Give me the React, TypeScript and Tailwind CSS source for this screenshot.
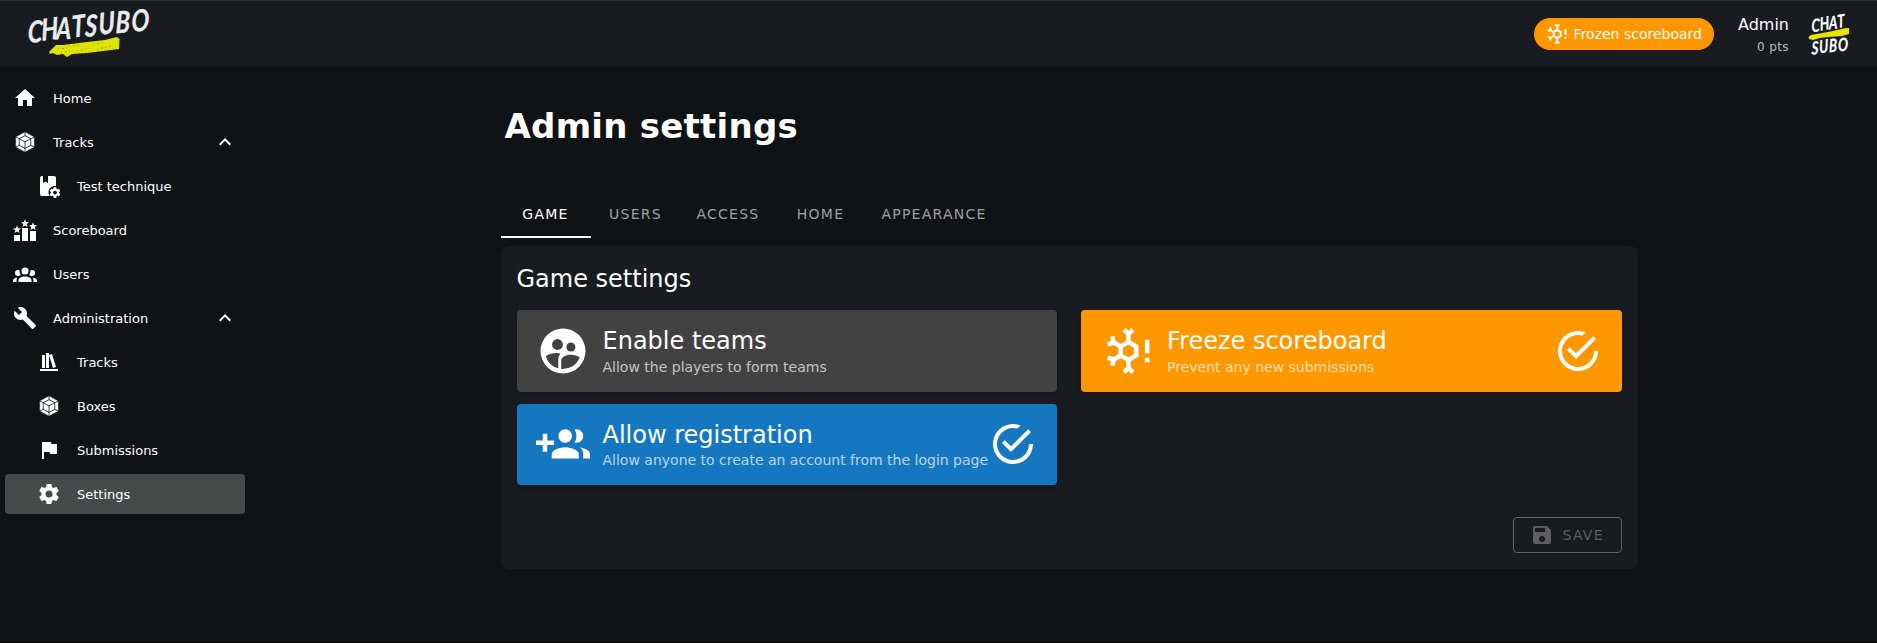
import React from "react";

const paths = {
  home: "M10,20V14H14V20H19V12H22L12,3L2,12H5V20H10Z",
  group:
    "M12,5.5A3.5,3.5 0 0,1 15.5,9A3.5,3.5 0 0,1 12,12.5A3.5,3.5 0 0,1 8.5,9A3.5,3.5 0 0,1 12,5.5M5,8C5.56,8 6.08,8.15 6.53,8.42C6.38,9.85 6.8,11.27 7.66,12.38C7.16,13.34 6.16,14 5,14A3,3 0 0,1 2,11A3,3 0 0,1 5,8M19,8A3,3 0 0,1 22,11A3,3 0 0,1 19,14C17.84,14 16.84,13.34 16.34,12.38C17.2,11.27 17.62,9.85 17.47,8.42C17.92,8.15 18.44,8 19,8M5.5,18.25C5.5,16.18 8.41,14.5 12,14.5C15.59,14.5 18.5,16.18 18.5,18.25V20H5.5V18.25M0,20V18.5C0,17.11 1.89,15.94 4.45,15.6C3.86,16.28 3.5,17.22 3.5,18.25V20H0M24,20H20.5V18.25C20.5,17.22 20.14,16.28 19.55,15.6C22.11,15.94 24,17.11 24,18.5V20Z",
  wrench:
    "M22.7,19L13.6,9.9C14.5,7.6 14,4.9 12.1,3C10.1,1 7.1,0.6 4.7,1.7L9,6L6,9L1.6,4.7C0.4,7.1 0.9,10.1 2.9,12.1C4.8,14 7.5,14.5 9.8,13.6L18.9,22.7C19.3,23.1 19.9,23.1 20.3,22.7L22.6,20.4C23.1,20 23.1,19.3 22.7,19Z",
  shelf: "M9 3V18H12V3H9M12 5L16 18L19 17L15 4L12 5M5 5V18H8V5H5M3 19V21H21V19H3Z",
  flag: "M14.4,6L14,4H5V21H7V14H12.6L13,16H20V6H14.4Z",
  cog: "M12,15.5A3.5,3.5 0 0,1 8.5,12A3.5,3.5 0 0,1 12,8.5A3.5,3.5 0 0,1 15.5,12A3.5,3.5 0 0,1 12,15.5M19.43,12.97C19.47,12.65 19.5,12.33 19.5,12C19.5,11.67 19.47,11.34 19.43,11L21.54,9.37C21.73,9.22 21.78,8.95 21.66,8.73L19.66,5.27C19.54,5.05 19.27,4.96 19.05,5.05L16.56,6.05C16.04,5.66 15.5,5.32 14.87,5.07L14.5,2.42C14.46,2.18 14.25,2 14,2H10C9.75,2 9.54,2.18 9.5,2.42L9.13,5.07C8.5,5.32 7.96,5.66 7.44,6.05L4.95,5.05C4.73,4.96 4.46,5.05 4.34,5.27L2.34,8.73C2.21,8.95 2.27,9.22 2.46,9.37L4.57,11C4.53,11.34 4.5,11.67 4.5,12C4.5,12.33 4.53,12.65 4.57,12.97L2.46,14.63C2.27,14.78 2.21,15.05 2.34,15.27L4.34,18.73C4.46,18.95 4.73,19.03 4.95,18.95L7.44,17.94C7.96,18.34 8.5,18.68 9.13,18.93L9.5,21.58C9.54,21.82 9.75,22 10,22H14C14.25,22 14.46,21.82 14.5,21.58L14.87,18.93C15.5,18.67 16.04,18.34 16.56,17.94L19.05,18.95C19.27,19.03 19.54,18.95 19.66,18.73L21.66,15.27C21.78,15.05 21.73,14.78 21.54,14.63L19.43,12.97Z",
  chevronUp: "M7.41,15.41L12,10.83L16.59,15.41L18,14L12,8L6,14L7.41,15.41Z",
  addGroup:
    "M13 13C11 13 7 14 7 16V18H19V16C19 14 15 13 13 13M19.62 13.16C20.45 13.88 21 14.82 21 16V18H24V16C24 14.46 21.63 13.5 19.62 13.16M13 11C14.66 11 16 9.66 16 8S14.66 5 13 5 10 6.34 10 8 11.34 11 13 11M18 11C19.66 11 21 9.66 21 8S19.66 5 18 5C17.68 5 17.37 5.05 17.08 5.14C17.65 5.95 18 6.94 18 8S17.65 10.04 17.08 10.86C17.37 10.95 17.68 11 18 11M8 10H5V7H3V10H0V12H3V15H5V12H8V10Z",
  check:
    "M20,12A8,8 0 0,1 12,20A8,8 0 0,1 4,12A8,8 0 0,1 12,4C12.76,4 13.5,4.11 14.2,4.31L15.77,2.74C14.61,2.26 13.34,2 12,2A10,10 0 0,0 2,12A10,10 0 0,0 12,22A10,10 0 0,0 22,12M7.91,10.08L6.5,11.5L11,16L21,6L19.59,4.58L11,13.17L7.91,10.08Z",
  save: "M15,9H5V5H15M12,19A3,3 0 0,1 9,16A3,3 0 0,1 12,13A3,3 0 0,1 15,16A3,3 0 0,1 12,19M17,3H5C3.89,3 3,3.9 3,5V19A2,2 0 0,0 5,21H19A2,2 0 0,0 21,19V7L17,3Z",
};

function Icon({ name, className }: { name: keyof typeof paths; className: string }) {
  return (
    <svg viewBox="0 0 24 24" fill="currentColor" className={className}>
      <path d={paths[name]} />
    </svg>
  );
}

function TeamsIcon() {
  return (
    <svg viewBox="0 0 24 24" className="size-[54px]">
      <circle cx="12" cy="12" r="10" fill="#fff" />
      <g fill="#424242">
        <circle cx="9.55" cy="9.1" r="2.4" />
        <circle cx="15.5" cy="10.2" r="2" />
        <path d="M4.35 14.3C5.6 13.4 7.6 12.9 9.2 12.9C9.8 12.9 10.3 13 10.8 13.1C10.2 13.9 9.9 14.8 9.9 15.9V19.7A8 8 0 0 1 4.35 14.3Z" />
        <path d="M11.2 20V16.4C11.2 14.7 13.2 13.7 15.3 13.7C16.9 13.7 18.5 14.1 19.4 14.9A8 8 0 0 1 11.2 20Z" />
      </g>
    </svg>
  );
}

function CubeIcon() {
  return (
    <svg viewBox="0 0 24 24" className="size-6">
      <path d="M12 2.4L20.8 7.2V16.8L12 21.6L3.2 16.8V7.2Z" fill="#fff" stroke="#fff" strokeWidth="0.7" strokeLinejoin="round" />
      <g stroke="#0f1315" strokeWidth="0.8" fill="none">
        <path d="M12 5.6L17.8 8.7V15.3L12 18.4L6.2 15.3V8.7Z" />
        <path d="M6.2 8.7L12 11.8L17.8 8.7M12 11.8V18.4M12 2V5.6M21 7L17.8 8.7M21 17L17.8 15.3M12 22V18.4M3 17L6.2 15.3M3 7L6.2 8.7" />
      </g>
    </svg>
  );
}

function BookCogIcon() {
  return (
    <svg viewBox="0 0 24 24" className="size-6">
      <path
        fill="#fff"
        d="M11.5 18C11.5 14.4 14.4 11.9 18 11.9H19V4A2 2 0 0 0 17 2H11V9L8.5 7.5L6 9V2H5A2 2 0 0 0 3 4V20A2 2 0 0 0 5 22H12.8C12 20.9 11.5 19.5 11.5 18Z"
      />
      <path d={paths.cog} fill="#fff" transform="translate(11.5 12.1) scale(0.54)" />
    </svg>
  );
}

function PodiumIcon() {
  const star = "M0,-4L1.1,-1.3L4,-1.1L1.8,0.8L2.5,3.6L0,2.1L-2.5,3.6L-1.8,0.8L-4,-1.1L-1.1,-1.3Z";
  return (
    <svg viewBox="0 0 24 24" fill="#fff" className="size-6">
      <path d="M1 17H7V23H1ZM9 10H15V23H9ZM17 13H23V23H17Z" />
      <path d={star} transform="translate(4 11.5)" />
      <path d={star} transform="translate(12 5.3)" />
      <path d={star} transform="translate(20 8.3)" />
    </svg>
  );
}

function SnowAlertIcon({ className }: { className: string }) {
  const arm = "M12.2 8V4.5M10.2 2.5L12.2 4.5L14.2 2.5";
  return (
    <svg viewBox="0 0 24 24" className={className} fill="none" stroke="#fff" strokeWidth="2">
      <path d="M12.2 8L15.66 10V14L12.2 16L8.74 14V10Z" />
      <path d={arm} />
      <path d={arm} transform="rotate(-60 12.2 12)" />
      <path d={arm} transform="rotate(-120 12.2 12)" />
      <path d={arm} transform="rotate(180 12.2 12)" />
      <path d="M20.5 7V13M20.5 15V17" />
    </svg>
  );
}

function BrandLogo() {
  return (
    <svg viewBox="0 0 130 64" className="h-16 w-[130px] overflow-visible">
      <path
        d="M22 50L26 46L29 43L36 43L60 40L78 38L90 35L92.5 37L92 47L84 48L60 51L45 52L40 55L36 52L30 53L26 51L23 52Z"
        fill="#dfe300"
      />
      <path
        d="M31 47L42 46M50 49L62 46M66 42L78 41M42 44L52 43M70 47L84 44M34 50L46 49"
        stroke="#8f9500"
        strokeWidth="0.8"
        strokeDasharray="1 3 2 2"
      />
      <text
        transform="translate(0.5 40.5) rotate(-6) skewX(-5) scale(0.79 1)"
        x="0 18 36 57 73 91 112 132"
        y="0"
        rotate="4 -2 3 -2 4 -2 2 3"
        fill="#ececec"
        stroke="#ececec"
        strokeWidth="0.3"
        className="font-['Lato',sans-serif] text-[30px] font-bold italic"
      >
        CHATSUBO
      </text>
    </svg>
  );
}

function AvatarLogo() {
  return (
    <svg viewBox="0 0 44 48" className="h-12 w-11 overflow-visible">
      <path d="M0.5 27L3 25L20 22L38 18L41 18L41 24L34 26L20 27L12 28L5 30L1 29Z" fill="#e2e600" />
      <g fill="#fff" stroke="#fff" strokeWidth="0.2" className="font-['Lato',sans-serif] text-[18px] font-bold italic">
        <text transform="translate(3.5 22) rotate(-8) skewX(-5) scale(0.74 1)" x="0 12 24 36" y="0" rotate="4 -2 2 -2">
          CHAT
        </text>
        <text transform="translate(3.5 44.5) rotate(-7) skewX(-5) scale(0.74 1)" x="0 11 24 36" y="0" rotate="4 -2 2 3">
          SUBO
        </text>
      </g>
    </svg>
  );
}

type Item = { label: string; icon: React.ReactNode; nested?: boolean; open?: boolean; active?: boolean };

const items: Item[] = [
  { label: "Home", icon: <Icon name="home" className="size-6" /> },
  { label: "Tracks", icon: <CubeIcon />, open: true },
  { label: "Test technique", icon: <BookCogIcon />, nested: true },
  { label: "Scoreboard", icon: <PodiumIcon /> },
  { label: "Users", icon: <Icon name="group" className="size-6" /> },
  { label: "Administration", icon: <Icon name="wrench" className="size-6" />, open: true },
  { label: "Tracks", icon: <Icon name="shelf" className="size-6" />, nested: true },
  { label: "Boxes", icon: <CubeIcon />, nested: true },
  { label: "Submissions", icon: <Icon name="flag" className="size-6" />, nested: true },
  { label: "Settings", icon: <Icon name="cog" className="size-6" />, nested: true, active: true },
];

function NavItem({ item }: { item: Item }) {
  return (
    <a
      className={`flex h-10 w-60 items-center rounded pr-2 text-[13px] text-white ${item.nested ? "pl-8" : "pl-2"} ${
        item.active ? "bg-[#474a4b]" : ""
      }`}
    >
      <span className="mr-4 shrink-0">{item.icon}</span>
      <span className="grow pt-0.5">{item.label}</span>
      {item.open && <Icon name="chevronUp" className="size-6" />}
    </a>
  );
}

function Card(props: { title: string; text: string; icon: React.ReactNode; color: string; checked?: boolean }) {
  return (
    <div className={`flex h-[81.5px] items-center rounded pl-[19.5px] pr-4 shadow-md ${props.color}`}>
      <div className="mr-[12.5px] flex w-[54px] shrink-0 justify-center">{props.icon}</div>
      <div className="grow whitespace-nowrap">
        <div className="-mb-[0.3px] pt-[1.3px] text-2xl leading-8">{props.title}</div>
        <div className="text-sm leading-[21px] text-white/70">{props.text}</div>
      </div>
      {props.checked && <Icon name="check" className="mr-1 size-12 shrink-0" />}
    </div>
  );
}

const tabs = [
  { label: "GAME", width: "w-[90px]" },
  { label: "USERS", width: "w-[90px]" },
  { label: "ACCESS", width: "w-[95px]" },
  { label: "HOME", width: "w-[90px]" },
  { label: "APPEARANCE", width: "w-[137px]" },
];

export default function App() {
  return (
    <div className="flex h-[643px] w-[1877px] flex-col overflow-hidden border-b border-black bg-[#0f1315] font-['DejaVu_Sans',sans-serif] text-white">
      <header className="flex h-[66px] shrink-0 items-center justify-between border-t border-[#2b2c30] bg-[#181b1f] pl-[27px] pr-[25px]">
        <BrandLogo />
        <div className="flex items-center">
          <div className="flex h-8 items-center rounded-full bg-[#ff9800] pl-[11px] pr-3 text-sm">
            <SnowAlertIcon className="mr-[5px] size-6" />
            Frozen scoreboard
          </div>
          <div className="ml-6 mr-[19px] pt-0.5 text-right">
            <div className="text-base leading-6">Admin</div>
            <div className="text-xs leading-5 tracking-[0.4px] text-white/70">0 pts</div>
          </div>
          <AvatarLogo />
        </div>
      </header>
      <div className="flex grow">
        <nav className="flex w-[250px] shrink-0 flex-col gap-1 pl-[5px] pt-3">
          {items.map((item, i) => (
            <NavItem key={i} item={item} />
          ))}
        </nav>
        <main className="ml-[250.5px] w-[1137px]">
          <h1 className="mt-9 pl-1 text-[34px] font-bold leading-12 tracking-[0.25px]">Admin settings</h1>
          <div className="mt-10 flex h-12 text-sm tracking-[1.25px]">
            {tabs.map((tab, i) => (
              <div
                key={tab.label}
                className={`flex items-center justify-center border-b-2 pt-0.5 ${tab.width} ${
                  i === 0 ? "border-white" : "border-transparent text-white/60"
                }`}
              >
                {tab.label}
              </div>
            ))}
          </div>
          <section className="mt-2 h-[323px] rounded-lg bg-[#181b1f] px-4 pt-[17px]">
            <h2 className="text-2xl leading-8">Game settings</h2>
            <div className="mt-[15px] grid grid-cols-2 gap-x-6 gap-y-3">
              <Card
                title="Enable teams"
                text="Allow the players to form teams"
                color="bg-[#424242]"
                icon={<TeamsIcon />}
              />
              <Card
                title="Freeze scoreboard"
                text="Prevent any new submissions"
                color="bg-[#ff9800]"
                checked
                icon={<SnowAlertIcon className="size-[54px]" />}
              />
              <Card
                title="Allow registration"
                text="Allow anyone to create an account from the login page"
                color="bg-[#1677c1]"
                checked
                icon={<Icon name="addGroup" className="mt-px size-[54px]" />}
              />
            </div>
            <div className="mt-8 flex justify-end">
              <button className="flex h-9 w-[109px] items-center rounded border border-[#626467] pl-[16px] text-sm tracking-[1.25px] text-[#5d5f62]">
                <Icon name="save" className="mr-[9px] size-6" />
                <span>SAVE</span>
              </button>
            </div>
          </section>
        </main>
      </div>
    </div>
  );
}
